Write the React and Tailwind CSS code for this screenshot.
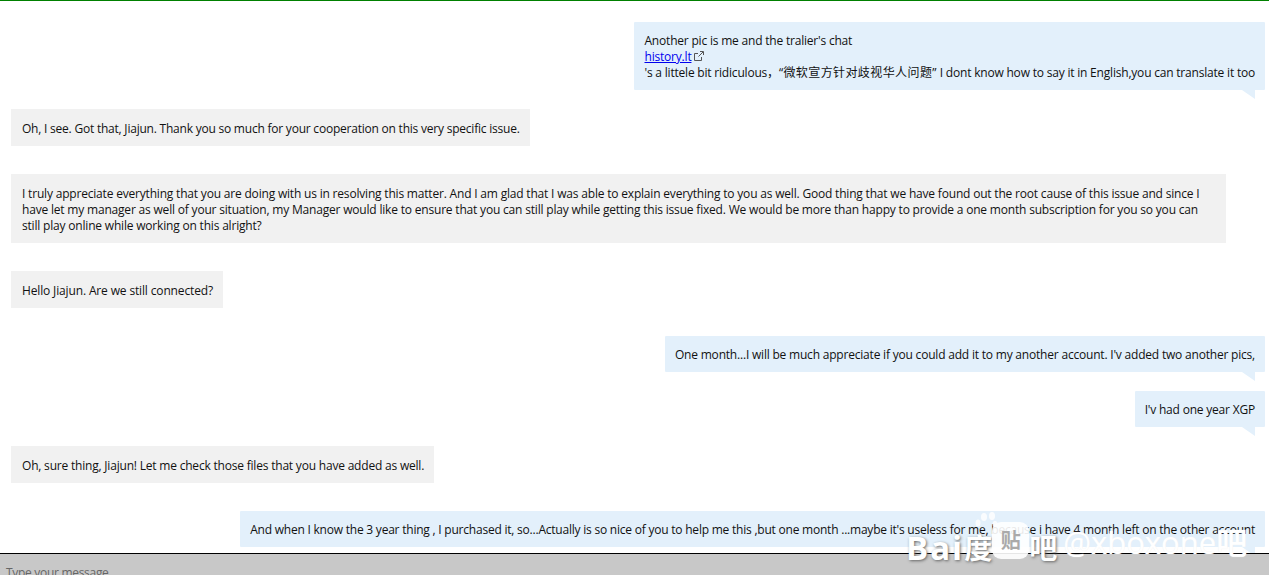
import React from "react";

const font = { fontFamily: '"Open Sans", "Noto Sans CJK SC", sans-serif' };

function Agent({ children, className = "" }) {
  return (
    <div className={`self-start bg-[#f1f1f1] pb-[9px] pl-[11px] pr-[10px] pt-[12px] text-[12px] leading-[16px] text-[#111] ${className}`}>
      {children}
    </div>
  );
}

function Customer({ children, className = "" }) {
  return (
    <div className={`relative self-end rounded-[1px] bg-[#e3f0fb] pb-[9px] pl-[10px] pr-[10px] pt-[11px] text-[12px] leading-[16px] text-[#111] ${className}`}>
      {children}
      <svg className="absolute right-[10px] top-full" width="13" height="9" viewBox="0 0 13 9">
        <path d="M0 0H13V9Z" fill="#e3f0fb" />
      </svg>
    </div>
  );
}

function ExternalIcon() {
  return (
    <svg className="ml-[3px] inline-block align-[0px]" width="10" height="10" viewBox="0 0 10 10" fill="none" stroke="#555" strokeWidth="1">
      <path d="M7.5 6V9.5H0.5V2.5H4" />
      <path d="M4.5 5.5L9 1M6 0.5H9.5V4" />
    </svg>
  );
}

function Paw() {
  return (
    <svg className="absolute left-[69px] top-[1px]" width="23" height="16" viewBox="0 0 23 16" fill="#fff" opacity="0.85">
      <ellipse cx="3" cy="11" rx="2.5" ry="3.5" />
      <ellipse cx="9" cy="5" rx="3" ry="4" />
      <ellipse cx="17" cy="4" rx="3" ry="4" />
      <ellipse cx="20" cy="12" rx="2.5" ry="3" />
    </svg>
  );
}

export default function App() {
  return (
    <div className="relative flex h-[575px] w-full flex-col overflow-hidden bg-white" style={font}>
      <div className="flex min-h-0 flex-1 flex-col overflow-hidden border-t border-[#008000] pl-[11px] pr-[4px] pt-[21px]">
        <Customer className="mb-[19px] tracking-[-0.2px]">
          Another pic is me and the tralier's chat
          <br />
          <a href="#" className="text-[#0000ee] underline">history.lt</a>
          <ExternalIcon />
          <br />
          's a littele bit ridiculous，<span className="tracking-[0.4px]">“微软宣方针对歧视华人问题”</span> I dont know how to say it in English,you can translate it too
        </Customer>
        <Agent className="mb-[28px] tracking-[-0.22px]">Oh, I see. Got that, Jiajun. Thank you so much for your cooperation on this very specific issue.</Agent>
        <Agent className="mb-[28px] w-[1215px] tracking-[-0.19px]">
          I truly appreciate everything that you are doing with us in resolving this matter. And I am glad that I was able to explain everything to you as well. Good thing that we have found out the root cause of this issue and since I
          <br />
          have let my manager as well of your situation, my Manager would like to ensure that you can still play while getting this issue fixed. We would be more than happy to provide a one month subscription for you so you can
          <br />
          still play online while working on this alright?
        </Agent>
        <Agent className="mb-[28px] tracking-[-0.145px]">Hello Jiajun. Are we still connected?</Agent>
        <Customer className="mb-[19px] tracking-[-0.2px]">One month...I will be much appreciate if you could add it to my another account. I'v added two another pics,</Customer>
        <Customer className="mb-[19px] tracking-[-0.2px]">I'v had one year XGP</Customer>
        <Agent className="mb-[28px] tracking-[-0.2px]">Oh, sure thing, Jiajun! Let me check those files that you have added as well.</Agent>
        <Customer className="tracking-[-0.22px]">And when I know the 3 year thing , I purchased it, so...Actually is so nice of you to help me this ,but one month ...maybe it's useless for me, because i have 4 month left on the other account</Customer>
      </div>
      <div className="h-[22px] shrink-0 overflow-hidden border-t border-black bg-[#c8c8c8] pl-[6px] pt-[11px] text-[12px] leading-[16px] tracking-[-0.3px] text-[#666]">
        Type your message
      </div>
      {/* Baidu watermark over the last message */}
      <div className="absolute left-[906px] top-[511px] flex h-[50px] items-end text-white">
        <Paw />
        <span className="text-[33px] font-bold leading-[26px] tracking-[2px] [text-shadow:1px_1px_3px_#666]">Bai</span>
        <span className="text-[28px] font-bold leading-[26px] [text-shadow:1px_1px_3px_#666]">度</span>
        <span className="mb-[2px] flex h-[37px] w-[37px] items-center justify-center rounded-[9px] bg-white/90 text-[20px] font-bold text-[#aaa]">贴</span>
        <span className="text-[28px] font-bold leading-[26px] [text-shadow:1px_1px_3px_#666]">吧</span>
        <span className="ml-[6px] text-[31px] font-medium leading-[38px] [text-shadow:0_0_1px_#eee]">@xboxone吧</span>
      </div>
    </div>
  );
}
